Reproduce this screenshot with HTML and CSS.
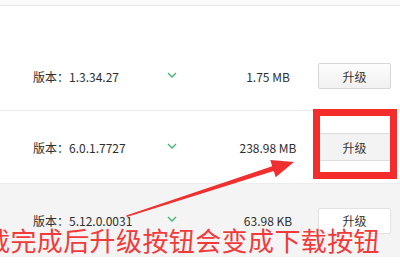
FILE: index.html
```html
<!DOCTYPE html>
<html lang="zh">
<head>
<meta charset="utf-8">
<link rel="stylesheet" href="styles.css">
</head>
<body>
<div class="page">
  <div class="topbar"></div>
  <div class="row row-first">
    <span class="ver">版本：1.3.34.27</span>
    <span class="chev"><svg width="10" height="6" viewBox="0 0 10 6"><polyline points="1,1 5,5 9,1" fill="none" stroke="#3dba74" stroke-width="1.4"/></svg></span>
    <span class="size">1.75 MB</span>
    <button class="btn">升级</button>
  </div>
  <div class="row row-second">
    <span class="ver">版本：6.0.1.7727</span>
    <span class="chev"><svg width="10" height="6" viewBox="0 0 10 6"><polyline points="1,1 5,5 9,1" fill="none" stroke="#3dba74" stroke-width="1.4"/></svg></span>
    <span class="size">238.98 MB</span>
    <button class="btn btn-hover">升级</button>
  </div>
  <div class="row row-third">
    <span class="ver">版本：5.12.0.0031</span>
    <span class="chev"><svg width="10" height="6" viewBox="0 0 10 6"><polyline points="1,1 5,5 9,1" fill="none" stroke="#3dba74" stroke-width="1.4"/></svg></span>
    <span class="size">63.98 KB</span>
    <button class="btn btn-white">升级</button>
  </div>

  <div class="frame"></div>
  <svg class="arrow" width="400" height="271" viewBox="0 0 400 271">
    <polygon points="126.8,216.9 273.8,171.1 275.7,177.3 294,162 270.3,160.1 272.2,166.3 126.2,215.6" fill="#f03030"/>
  </svg>
  <div class="note">载完成后升级按钮会变成下载按钮</div>
</div>
</body>
</html>
```

FILE: styles.css
```css
html, body {
  margin: 0;
  padding: 0;
  background: #ffffff;
}
.page {
  position: relative;
  width: 400px;
  height: 271px;
  overflow: hidden;
  font-family: "Noto Sans CJK SC", "Noto Sans", sans-serif;
  font-size: 12px;
  color: #2e2e2e;
}
.topbar {
  height: 5px;
  background: #fafafa;
  border-bottom: 1px solid #e6e6e6;
}
.row {
  display: grid;
  grid-template-columns: 113px 52px 120px 73px;
  align-items: center;
  padding-left: 33px;
  box-sizing: border-box;
}
.row-first {
  padding-top: 36px;
  height: 105px;
  border-bottom: 1px solid #ececec;
}
.row-second {
  height: 73px;
  border-bottom: 1px solid #ececec;
}
.row-third {
  height: 73px;
  background: #f4f4f4;
}
.ver {
  white-space: nowrap;
}
.chev {
  display: flex;
  justify-content: center;
  padding-bottom: 3px;
}
.size {
  text-align: center;
  padding-left: 20px;
  white-space: nowrap;
}
.btn {
  width: 73px;
  height: 26px;
  padding: 0;
  font-family: inherit;
  font-size: 12px;
  color: #333333;
  border: 1px solid #d6d6d6;
  border-radius: 2px;
  background: linear-gradient(#fdfdfd, #f1f1f1);
}
.btn-hover {
  height: 28px;
  background: #f3f3f3;
  border-color: #dcdcdc;
  border-left: none;
  border-right: none;
}
.btn-white {
  background: #ffffff;
  border-color: #e2e2e2;
}
.frame {
  position: absolute;
  left: 313px;
  top: 109px;
  width: 84px;
  height: 70px;
  box-sizing: border-box;
  border: 7px solid #f52c2c;
}
.arrow {
  position: absolute;
  left: 0;
  top: 0;
}
.note {
  position: absolute;
  left: -16px;
  top: 222px;
  font-size: 26px;
  line-height: 36px;
  white-space: nowrap;
  color: #f23a3a;
  letter-spacing: 0.4px;
}
```
